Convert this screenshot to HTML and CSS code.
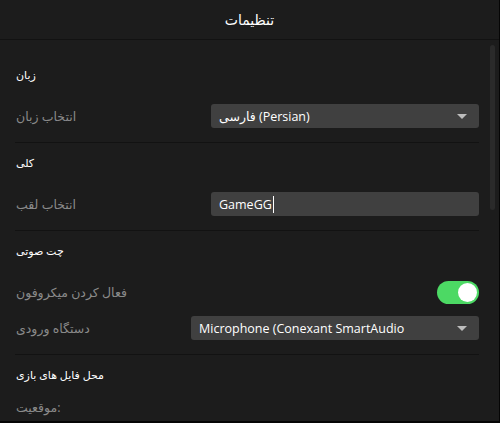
FILE: index.html
```html
<!DOCTYPE html>
<html lang="fa">
<head>
<meta charset="utf-8">
<title>تنظیمات</title>
<link rel="stylesheet" href="styles.css">
</head>
<body>
<div class="window">
  <header class="titlebar">تنظیمات</header>
  <div class="content">
    <section class="group">
      <h2 class="group-title">زبان</h2>
      <div class="row">
        <span class="label">انتخاب زبان</span>
        <div class="select lang-select"><span class="select-text">فارسی (Persian)</span><span class="arrow"></span></div>
      </div>
    </section>
    <section class="group">
      <h2 class="group-title">کلی</h2>
      <div class="row">
        <span class="label">انتخاب لقب</span>
        <div class="textbox"><span class="select-text">GameGG</span><span class="caret"></span></div>
      </div>
    </section>
    <section class="group">
      <h2 class="group-title">چت صوتی</h2>
      <div class="rows">
        <div class="row">
          <span class="label">فعال کردن میکروفون</span>
          <div class="toggle"><span class="knob"></span></div>
        </div>
        <div class="row">
          <span class="label">دستگاه ورودی</span>
          <div class="select device-select"><span class="select-text">Microphone (Conexant SmartAudio</span><span class="arrow"></span></div>
        </div>
      </div>
    </section>
    <section class="group last">
      <h2 class="group-title">محل فایل های بازی</h2>
      <div class="row short">
        <span class="label">موقعیت:</span>
      </div>
    </section>
  </div>
  <div class="scrollbar"></div>
</div>
</body>
</html>
```

FILE: styles.css
```css
* { box-sizing: border-box; }
html, body { margin: 0; padding: 0; }
body {
  background: #050505;
  width: 500px;
  height: 423px;
  overflow: hidden;
  font-family: "Open Sans", "DejaVu Sans", sans-serif;
}
.window {
  position: relative;
  width: 499px;
  height: 421px;
  background: #1c1c1c;
  overflow: hidden;
}
.titlebar {
  height: 40px;
  border-bottom: 1px solid #121212;
  display: flex;
  align-items: center;
  justify-content: center;
  color: #ffffff;
  font-size: 14px;
  padding-bottom: 1px;
}
.content {
  padding-top: 15px;
}
.group {
  margin: 0 20px 0 15px;
  padding: 10px 0 14px 1px;
  border-bottom: 1px solid #121212;
}
.group.last { border-bottom: none; }
.group-title {
  margin: 0 0 19px 0;
  height: 20px;
  line-height: 20px;
  font-size: 11px;
  font-weight: normal;
  color: #ffffff;
}
.group.last .group-title { margin-bottom: 12px; }
.rows {
  display: flex;
  flex-direction: column;
  gap: 12px;
}
.row {
  height: 24px;
  display: flex;
  align-items: center;
  justify-content: space-between;
}
.row.short { height: 20px; }
.label {
  color: #8a8a8a;
  font-size: 12.5px;
}
.select, .textbox {
  height: 24px;
  background: #404040;
  border-radius: 3px;
  display: flex;
  align-items: center;
  padding: 0 12px 0 8px;
  color: #ffffff;
  font-size: 12.5px;
}
.lang-select, .textbox { width: 268px; }
.device-select { width: 288px; }
.select { justify-content: space-between; }
.select-text { white-space: nowrap; }
.arrow {
  width: 0;
  height: 0;
  border-left: 5px solid transparent;
  border-right: 5px solid transparent;
  border-top: 5px solid #bdbdbd;
}
.caret {
  display: inline-block;
  width: 1px;
  height: 17px;
  background: #ffffff;
  margin-left: 1px;
}
.toggle {
  width: 42px;
  height: 23px;
  border-radius: 12px;
  background: #4cd964;
  display: flex;
  align-items: center;
  justify-content: flex-end;
  padding-right: 2px;
}
.knob {
  width: 19px;
  height: 19px;
  border-radius: 50%;
  background: #ffffff;
}
.scrollbar {
  position: absolute;
  left: 490px;
  top: 45px;
  width: 5px;
  height: 165px;
  border-radius: 3px;
  background: #2a2a2a;
}
```
